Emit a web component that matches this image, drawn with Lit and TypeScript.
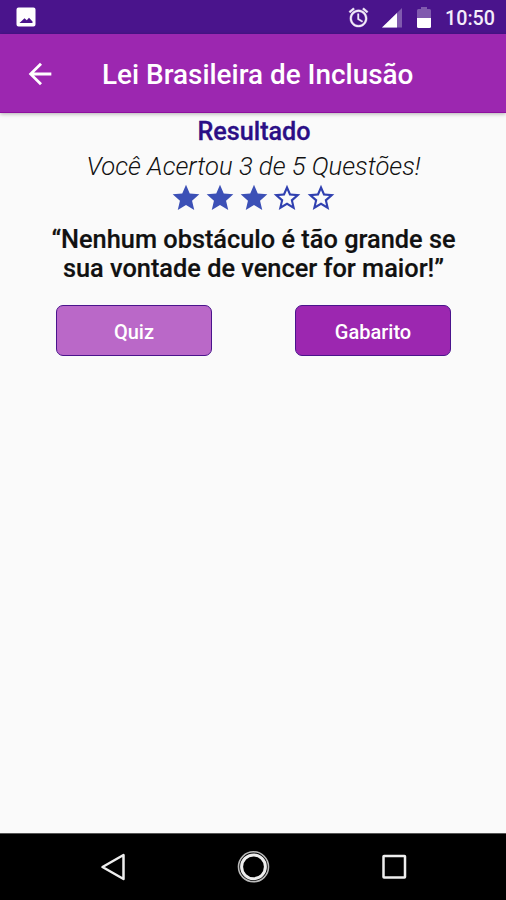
import { LitElement, html, css } from "lit";
import { customElement, property } from "lit/decorators.js";

@customElement("status-bar")
class StatusBar extends LitElement {
  static styles = css`
    :host { display: flex; box-sizing: border-box; height: 34px; background: #4a148c; color: #f3ecfa; padding: 0 11px 0 16px; align-items: center; }
    svg { display: block; flex: none; }
    .photo { margin-right: auto; }
    .alarm { margin-right: 12px; }
    .signal { margin-right: 15px; margin-top: 2px; }
    .battery { margin-right: 14px; margin-top: 1px; }
    .time { font-size: 19.700px; font-weight: 500; line-height: 34px; padding-top: 3px; }
  `;
  render() {
    return html`
      <svg class="photo" width="20" height="20" viewBox="0 0 20 20">
        <path fill="#fff" fill-rule="evenodd" d="M2.500.5h15a2 2 0 0 1 2 2v15a2 2 0 0 1-2 2h-15a2 2 0 0 1-2-2v-15a2 2 0 0 1 2-2zM3.500 16h13v-1.500L13 10.700 10.800 13.300 8.500 11.300z" />
      </svg>
      <svg class="alarm" width="23" height="23" viewBox="0 0 24 24">
        <path fill="currentColor" stroke="currentColor" stroke-width=".4" d="M22 5.720l-4.600-3.860-1.290 1.530 4.600 3.860L22 5.720zM7.880 3.390L6.600 1.860 2 5.710l1.290 1.530 4.590-3.850zM12.500 8H11v6l4.750 2.850.75-1.230-4-2.370V8zM12 4c-4.970 0-9 4.030-9 9s4.020 9 9 9c4.970 0 9-4.030 9-9s-4.030-9-9-9zm0 16c-3.870 0-7-3.130-7-7s3.130-7 7-7 7 3.130 7 7-3.130 7-7 7z" />
      </svg>
      <svg class="signal" width="20" height="20" viewBox="0 0 20 20">
        <path fill="#fff" fill-opacity=".3" d="M0 19.500L20 0v19.500z" />
        <path fill="#fff" d="M0 19.500L15 4.900v14.600z" />
      </svg>
      <svg class="battery" width="14" height="21" viewBox="0 0 14 21">
        <path fill="#fff" fill-opacity=".3" d="M0 11V3.500Q0 2 1.500 2H4V0h6v2h2.500Q14 2 14 3.500V11z" />
        <path fill="#fff" d="M0 11h14v8.500q0 1.500-1.500 1.500h-11Q0 21 0 19.500z" />
      </svg>
      <span class="time">10:50</span>
    `;
  }
}

@customElement("star-rating")
class StarRating extends LitElement {
  @property({ type: Number }) value = 0;
  @property({ type: Number }) max = 5;
  static styles = css`
    :host { display: flex; justify-content: center; gap: 1.800px; }
    svg { display: block; fill: #3040b0; }
    .full { fill: #3c50b6; }
  `;
  render() {
    return Array.from({ length: this.max }, (_, i) => html`
      <svg class=${i < this.value ? "full" : "empty"} width="32" height="32" viewBox="0 0 24 24">
        <path d=${i < this.value
          ? "M12 17.270L18.180 21l-1.640-7.030L22 9.240l-7.190-.61L12 2 9.190 8.630 2 9.240l5.460 4.730L5.820 21z"
          : "M22 9.240l-7.190-.62L12 2 9.190 8.630 2 9.240l5.460 4.730L5.820 21 12 17.270 18.180 21l-1.630-7.030L22 9.240zM12 15.400l-3.760 2.270 1-4.280-3.320-2.880 4.380-.38L12 6.100l1.710 4.040 4.380.38-3.320 2.880 1 4.280L12 15.400z"} />
      </svg>`);
  }
}

@customElement("app-root")
class AppRoot extends LitElement {
  static styles = css`
    :host { display: flex; flex-direction: column; height: 900px; background: #fafafa; font-family: Roboto, "Liberation Sans", sans-serif; overflow: hidden; }
    status-bar { flex: none; }
    .bar { flex: none; display: flex; align-items: center; box-sizing: border-box; height: 79px; padding-left: 23px; background: #9c27b0; border-bottom: 1px solid #8e0f9f; color: #fff; box-shadow: 0 1px 4px rgba(0, 0, 0, .3); z-index: 1; }
    .bar svg { display: block; margin: 1px 45px 0 0; }
    .title { font-size: 27.900px; font-weight: 500; line-height: 34px; margin: 4px 0 0; white-space: nowrap; }
    main { flex: 1; display: flex; flex-direction: column; text-align: center; }
    .result { margin: 3px 0 0; padding-left: 2px; font-size: 25.200px; line-height: 32px; font-weight: 500; color: #2b0f86; -webkit-text-stroke: .3px #2b0f86; }
    .score { margin: 2px 0 0; padding-left: 1px; font-size: 25.650px; line-height: 32px; font-style: italic; font-weight: 300; color: #111; }
    star-rating { padding: 0 0 0 1px; }
    .quote { margin: 11px 0 0; padding-left: 1px; font-size: 25.350px; line-height: 29.300px; font-weight: 500; color: #111; -webkit-text-stroke: .2px #111; }
    .line { display: block; white-space: nowrap; }
    .actions { display: flex; justify-content: space-between; padding: 0 55px 0 56px; margin-top: 21.400px; }
    button { box-sizing: border-box; width: 156px; height: 51px; border: 1.500px solid #4a148c; border-radius: 7px; padding: 3px 0 0; background: #9c27b0; color: #fff; font: 500 20px Roboto, sans-serif; }
    .light { background: #ba68c8; }
    nav { flex: none; display: flex; justify-content: space-between; align-items: center; box-sizing: border-box; height: 67px; padding: 0 98px 0 100px; background: #000; border-top: 1px solid #555; }
    nav svg { display: block; fill: none; stroke: #eee; stroke-width: 2.500; stroke-linejoin: round; }
    .ring { stroke: #bbb; stroke-width: 1.600; }
    .disc { stroke-width: 3; }
  `;
  render() {
    return html`
      <status-bar></status-bar>
      <header class="bar">
        <svg width="34" height="34" viewBox="0 0 24 24" fill="#fff"><path d="M20 11H7.830l5.590-5.590L12 4l-8 8 8 8 1.410-1.410L7.830 13H20v-2z" /></svg>
        <h1 class="title">Lei Brasileira de Inclusão</h1>
      </header>
      <main>
        <h2 class="result">Resultado</h2>
        <p class="score">Você Acertou 3 de 5 Questões!</p>
        <star-rating value="3" max="5"></star-rating>
        <p class="quote"><span class="line">“Nenhum obstáculo é tão grande se</span><span class="line">sua vontade de vencer for maior!”</span></p>
        <div class="actions"><button class="light">Quiz</button><button>Gabarito</button></div>
      </main>
      <nav>
        <svg width="28" height="34" viewBox="0 0 28 34"><path d="M2.500 17L23.500 5v24z" /></svg>
        <svg width="34" height="34" viewBox="0 0 34 34"><circle class="ring" cx="16.500" cy="16.800" r="15" /><circle class="disc" cx="16.500" cy="16.800" r="11.900" /></svg>
        <svg width="28" height="34" viewBox="0 0 28 34"><rect x="3.500" y="6" width="21.500" height="21.500" rx=".5" /></svg>
      </nav>
    `;
  }
}
